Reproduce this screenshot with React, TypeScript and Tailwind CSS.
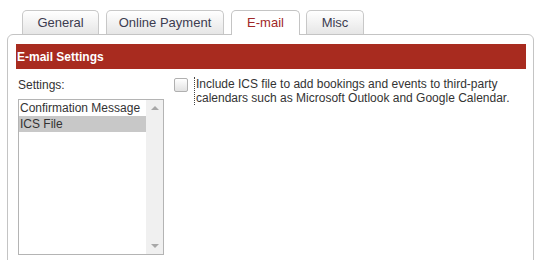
const tabs = [
  { label: "General", w: "w-[77px]" },
  { label: "Online Payment", w: "w-[118px]" },
  { label: "E-mail", w: "w-[69px]", active: true },
  { label: "Misc", w: "w-[58px]" },
];

export default function App() {
  return (
    <div
      className="w-[539px] h-[260px] overflow-hidden bg-white text-[#333] text-[12px]"
      style={{ fontFamily: '"Liberation Sans", Arial, sans-serif' }}
    >
      {/* tab strip */}
      <div className="flex items-end gap-[7px] pl-[22px] pt-[9px] h-[34px]">
        {tabs.map((t) =>
          t.active ? (
            <div
              key={t.label}
              className={`${t.w} relative z-10 h-[25px] -mb-px -mr-px flex items-center justify-center rounded-t-[5px] border border-b-0 border-[#c4c4c4] bg-white text-[13px] text-[#a02828]`}
            >
              {t.label}
            </div>
          ) : (
            <div
              key={t.label}
              className={`${t.w} h-[24px] flex items-center justify-center rounded-t-[5px] border border-b-0 border-[#c8c8c8] bg-gradient-to-b from-white to-[#e6e6e6] text-[13px] text-[#3c3c50]`}
            >
              {t.label}
            </div>
          )
        )}
      </div>

      {/* panel */}
      <div className="ml-[7px] w-[527px] h-[240px] rounded-t-[6px] border border-[#c4c4c4] pt-[9px] pl-[8px] pr-[7px]">
        <div className="h-[25px] bg-[#a82b1f] text-white font-bold flex items-center pl-[1px]">
          E-mail Settings
        </div>

        <div className="flex mt-[6px] pl-[2px]">
          <div className="w-[146px]">
            <div className="h-[20px] flex items-center">Settings:</div>
            <div className="mt-[4px] h-[156px] border border-[#b4b4b4] flex">
              <div className="flex-1 text-[#333]">
                <div className="h-[16px] leading-[16px] pl-[1px]">Confirmation Message</div>
                <div className="h-[16px] leading-[16px] pl-[1px] bg-[#c8c8c8]">ICS File</div>
              </div>
              <div className="w-[17px] bg-[#f0f0f0] flex flex-col justify-between items-center py-[6px]">
                <span className="block w-0 h-0 border-x-[4px] border-x-transparent border-b-[4px] border-b-[#a8a8a8]" />
                <span className="block w-0 h-0 border-x-[4px] border-x-transparent border-t-[4px] border-t-[#a8a8a8]" />
              </div>
            </div>
          </div>

          <div className="flex items-start ml-[10px] pt-[2px]">
            <span className="mt-[1px] w-[14px] h-[14px] rounded-[2px] border border-[#b0b0b0] bg-gradient-to-b from-white to-[#e2e2e2] shrink-0" />
            <span className="ml-[6px] pl-[1px] border-l border-dotted border-[#444] leading-[14px] text-[#333]">
              Include ICS file to add bookings and events to third-party
              <br />
              calendars such as Microsoft Outlook and Google Calendar.
            </span>
          </div>
        </div>
      </div>
    </div>
  );
}
